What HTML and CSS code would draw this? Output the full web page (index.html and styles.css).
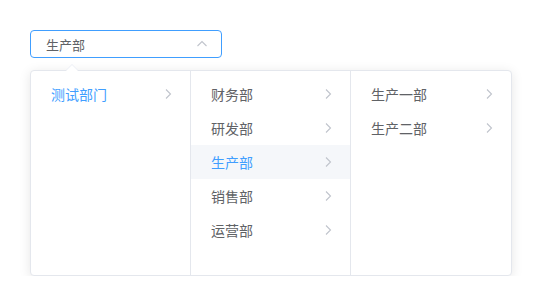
FILE: index.html
```html
<!DOCTYPE html>
<html lang="zh">
<head>
<meta charset="utf-8">
<link rel="stylesheet" href="styles.css">
</head>
<body>
<div class="cascader">
  <div class="input">
    <span class="value">生产部</span>
    <svg class="caret" width="12" height="12" viewBox="0 0 12 12"><path d="M1.5 8 L6 3.5 L10.5 8" fill="none" stroke="#C0C4CC" stroke-width="1.1"/></svg>
  </div>
  <div class="panel">
    <div class="arrow"></div>
    <ul class="menu">
      <li class="node active">测试部门<svg class="chev" width="8" height="12" viewBox="0 0 8 12"><path d="M2 1.5 L6.5 6 L2 10.5" fill="none" stroke="#C0C4CC" stroke-width="1.1"/></svg></li>
    </ul>
    <ul class="menu">
      <li class="node">财务部<svg class="chev" width="8" height="12" viewBox="0 0 8 12"><path d="M2 1.5 L6.5 6 L2 10.5" fill="none" stroke="#C0C4CC" stroke-width="1.1"/></svg></li>
      <li class="node">研发部<svg class="chev" width="8" height="12" viewBox="0 0 8 12"><path d="M2 1.5 L6.5 6 L2 10.5" fill="none" stroke="#C0C4CC" stroke-width="1.1"/></svg></li>
      <li class="node active hover">生产部<svg class="chev" width="8" height="12" viewBox="0 0 8 12"><path d="M2 1.5 L6.5 6 L2 10.5" fill="none" stroke="#C0C4CC" stroke-width="1.1"/></svg></li>
      <li class="node">销售部<svg class="chev" width="8" height="12" viewBox="0 0 8 12"><path d="M2 1.5 L6.5 6 L2 10.5" fill="none" stroke="#C0C4CC" stroke-width="1.1"/></svg></li>
      <li class="node">运营部<svg class="chev" width="8" height="12" viewBox="0 0 8 12"><path d="M2 1.5 L6.5 6 L2 10.5" fill="none" stroke="#C0C4CC" stroke-width="1.1"/></svg></li>
    </ul>
    <ul class="menu last">
      <li class="node">生产一部<svg class="chev" width="8" height="12" viewBox="0 0 8 12"><path d="M2 1.5 L6.5 6 L2 10.5" fill="none" stroke="#C0C4CC" stroke-width="1.1"/></svg></li>
      <li class="node">生产二部<svg class="chev" width="8" height="12" viewBox="0 0 8 12"><path d="M2 1.5 L6.5 6 L2 10.5" fill="none" stroke="#C0C4CC" stroke-width="1.1"/></svg></li>
    </ul>
  </div>
</div>
</body>
</html>
```
FILE: styles.css
```css
html, body {
  margin: 0;
  padding: 0;
  background: #fff;
}
body {
  padding: 30px 0 0 30px;
  font-family: "Noto Sans CJK SC", "Noto Sans", sans-serif;
  color: #606266;
}
.cascader {
  display: flex;
  flex-direction: column;
  align-items: flex-start;
}
.input {
  box-sizing: border-box;
  width: 192px;
  height: 28px;
  border: 1px solid #409EFF;
  border-radius: 4px;
  display: flex;
  align-items: center;
  justify-content: space-between;
  padding: 0 13px 0 15px;
  font-size: 13px;
  color: #606266;
}
.caret {
  display: block;
}
.panel {
  position: relative;
  margin-top: 12px;
  display: flex;
  border: 1px solid #E4E7ED;
  border-radius: 4px;
  background: #fff;
  box-shadow: 0 2px 12px 0 rgba(0, 0, 0, 0.1);
}
.arrow {
  position: absolute;
  top: -7px;
  left: 35px;
  width: 0;
  height: 0;
  border-left: 6px solid transparent;
  border-right: 6px solid transparent;
  border-bottom: 6px solid #EBEEF5;
}
.arrow::after {
  content: "";
  position: absolute;
  left: -6px;
  top: 1px;
  border-left: 6px solid transparent;
  border-right: 6px solid transparent;
  border-bottom: 6px solid #fff;
}
.menu {
  list-style: none;
  margin: 0;
  padding: 6px 0;
  box-sizing: border-box;
  width: 160px;
  height: 204px;
  border-right: 1px solid #E4E7ED;
}
.menu.last {
  width: 160px;
  border-right: none;
}
.node {
  height: 34px;
  display: flex;
  align-items: center;
  justify-content: space-between;
  padding: 0 18px 0 20px;
  font-size: 14px;
  color: #606266;
}
.node.active {
  color: #409EFF;
}
.node.hover {
  background: #F5F7FA;
}
.chev {
  display: block;
}
```
